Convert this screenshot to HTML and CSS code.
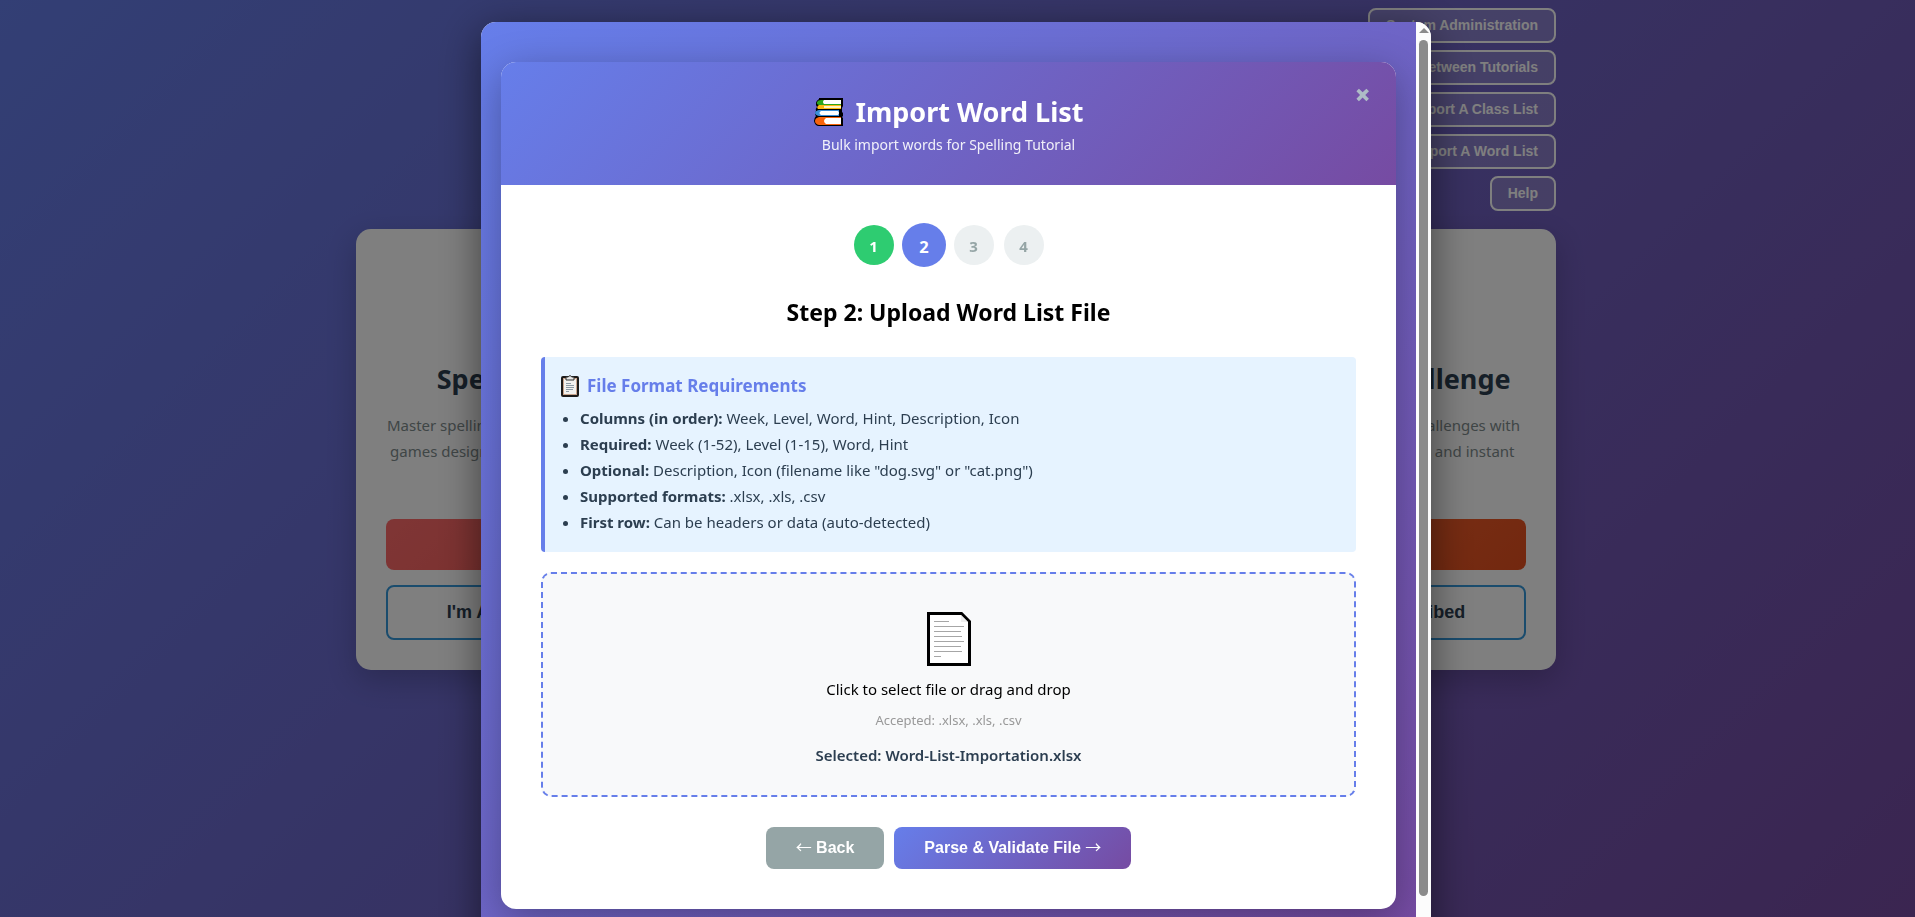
FILE: index.html
```html
<!DOCTYPE html>
<html lang="en">
  <head>
    <meta charset="UTF-8" />
    <meta name="viewport" content="width=device-width, initial-scale=1.0" />
    <title>Import Word List</title>
    <link rel="stylesheet" href="styles.css">
  </head>
  <body>
    <div class="page">
      <nav class="top-menu">
        <button class="menu-btn">System Administration</button>
        <button class="menu-btn">Switch Between Tutorials</button>
        <button class="menu-btn">Import A Class List</button>
        <button class="menu-btn">Import A Word List</button>
        <button class="menu-btn">Help</button>
      </nav>
      <main class="cards">
        <section class="card">
          <h2>Spelling Tutorial</h2>
          <p>Master spelling through engaging interactive games designed for students of all ages and abilities</p>
          <button class="subscribe-btn red">Subscribe</button>
          <button class="member-btn">I'm Already Subscribed</button>
        </section>
        <section class="card">
          <h2>Reading Tutorial</h2>
          <p>Build reading skills with short stories and quizzes</p>
          <button class="subscribe-btn green">Subscribe</button>
          <button class="member-btn">I'm Already Subscribed</button>
        </section>
        <section class="card">
          <h2>Math Facts Challenge</h2>
          <p>Practice your skills in maths challenges with adaptive difficulty progression and instant feedback</p>
          <button class="subscribe-btn orange">Subscribe</button>
          <button class="member-btn">I'm Already Subscribed</button>
        </section>
      </main>
    </div>

    <div class="overlay">
      <div class="modal">
        <div class="modal-body">
          <div class="import-box">
            <header class="import-header">
              <h1>
                <svg class="books" viewBox="0 0 32 32" aria-hidden="true">
                  <path d="M6 2h24v8l-1 2v4l1 1v3l-1 1 1 1v8H6q-4 0-5-5 0-3 2-5-2-2 0-5-1-2 1-4-3-5 2-8z" fill="#000"/>
                  <path d="M8 4h20v5H6q-3-1-2-3 1-2 4-2z" fill="#2ca61c"/>
                  <path d="M11 4h17v4H11q-2-2 0-4z" fill="#fff"/>
                  <path d="M6 9h22v4H5q-2-2 1-4z" fill="#fdb813"/>
                  <path d="M11 10h17v2H11z" fill="#fff3c4"/>
                  <path d="M6 14h20v6H6q-4-1-4-3t4-3z" fill="#3a8fd8"/>
                  <path d="M8 15h17q2 2 0 4H8q-3-2 0-4z" fill="#fff"/>
                  <path d="M6 21h22v8H6q-4-1-4-4t4-4z" fill="#f7630c"/>
                  <path d="M13 22h15v6H13q-4-3 0-6z" fill="#fff"/>
                </svg>
                Import Word List
              </h1>
              <p>Bulk import words for Spelling Tutorial</p>
            </header>
            <div class="import-content">
              <ol class="steps">
                <li class="step done">1</li>
                <li class="step active">2</li>
                <li class="step">3</li>
                <li class="step">4</li>
              </ol>
              <h2 class="step-title">Step 2: Upload Word List File</h2>

              <div class="info-box">
                <h3>
                  <svg class="clipboard" viewBox="0 0 18 22" aria-hidden="true">
                    <rect x="0" y="1" width="18" height="21" rx="2" fill="#1d1a1a"/>
                    <rect x="2" y="3" width="14" height="17" fill="#c9a48c"/>
                    <rect x="3" y="4" width="12" height="15" fill="#f3f1ef"/>
                    <path d="M5 5V2h2q2-3 4 0h2v3z" fill="#e8e8e8" stroke="#333" stroke-width="1"/>
                    <path d="M5 8.500h5M5 10.500h8M5 12.500h8M5 14.500h7M5 16.500h3" stroke="#8d9aa5"/>
                  </svg>
                  File Format Requirements
                </h3>
                <ul>
                  <li><strong>Columns (in order):</strong> Week, Level, Word, Hint, Description, Icon</li>
                  <li><strong>Required:</strong> Week (1-52), Level (1-15), Word, Hint</li>
                  <li><strong>Optional:</strong> Description, Icon (filename like "dog.svg" or "cat.png")</li>
                  <li><strong>Supported formats:</strong> .xlsx, .xls, .csv</li>
                  <li><strong>First row:</strong> Can be headers or data (auto-detected)</li>
                </ul>
              </div>

              <label class="drop-zone" for="wordFile">
                <svg class="file-icon" viewBox="0 0 44 54" aria-hidden="true">
                  <path d="M1.500 1.500h33l8 8v43h-41z" fill="#fff" stroke="#000" stroke-width="3"/>
                  <path d="M34 3v7h7z" fill="#eee"/>
                  <path d="M7 9.500h15M7 14.500h30M7 19.500h27M7 24.500h28M7 29.500h30M7 34.500h27M7 39.500h28M7 44.500h7" stroke="#a6a6a6"/>
                </svg>
                <span class="drop-text">Click to select file or drag and drop</span>
                <span class="drop-hint">Accepted: .xlsx, .xls, .csv</span>
                <span class="drop-file">Selected: Word-List-Importation.xlsx</span>
                <input type="file" id="wordFile" accept=".xlsx,.xls,.csv" hidden>
              </label>

              <div class="actions">
                <button class="btn btn-back"><span class="arrow">←</span> Back</button>
                <button class="btn btn-next">Parse &amp; Validate File <span class="arrow">→</span></button>
              </div>
            </div>
          </div>
        </div>
        <div class="scrollbar">
          <div class="scroll-arrow"></div>
          <div class="scroll-thumb"></div>
        </div>
        <button class="close-btn" aria-label="Close">×</button>
      </div>
    </div>
  </body>
</html>
```
FILE: styles.css
```css
* {
  box-sizing: border-box;
  margin: 0;
  padding: 0;
}

body {
  min-height: 100vh;
  padding-right: 3px;
  font-family: "Segoe UI", "Noto Sans", sans-serif;
  font-size: 15px;
  background: linear-gradient(135deg, #667eea 0%, #764ba2 100%);
  overflow: hidden;
}

.page {
  max-width: 1200px;
  margin: 0 auto;
  padding-top: 8px;
}

.top-menu {
  display: flex;
  flex-direction: column;
  align-items: flex-end;
  gap: 7px;
  margin-bottom: 18px;
}

.menu-btn {
  height: 35px;
  padding: 0 16px 2px;
  border: 2px solid #fff;
  border-radius: 8px;
  background: rgba(255, 255, 255, 0.2);
  color: #fff;
  font: bold 14px "Liberation Sans", Arial, sans-serif;
}

/* Tutorial cards */
.cards {
  display: grid;
  grid-template-columns: repeat(3, 1fr);
  gap: 30px;
}

.card {
  padding: 130px 30px 30px;
  border-radius: 15px;
  background: #fff;
  box-shadow: 0 10px 30px rgba(0, 0, 0, 0.2);
  text-align: center;
}

.card h2 {
  margin-bottom: 13px;
  color: #2c3e50;
  font-size: 27px;
  line-height: 40px;
}

.card p {
  min-height: 78px;
  margin-bottom: 29px;
  color: #7f8c8d;
  line-height: 26px;
}

.card button {
  display: block;
  width: 100%;
  border-radius: 8px;
  font: bold 18px "Liberation Sans", Arial, sans-serif;
}

.subscribe-btn {
  height: 51px;
  margin-bottom: 15px;
  border: none;
  color: #fff;
}

.red {
  background: linear-gradient(135deg, #ff6b6b, #ee5a52);
}

.green {
  background: linear-gradient(135deg, #2ecc71, #27ae60);
}

.orange {
  background: linear-gradient(135deg, #ff6b35, #e5501f);
}

.member-btn {
  height: 55px;
  border: 2px solid #3498db;
  background: #fff;
  color: #2c3e50;
}

/* Modal */
.overlay {
  position: fixed;
  inset: 0;
  padding: 22px 3px 0 0;
  background: rgba(0, 0, 0, 0.5);
}

.modal {
  position: relative;
  display: flex;
  width: 950px;
  max-width: 100%;
  margin: 0 auto;
  border-radius: 15px;
  overflow: hidden;
  background: #fff;
  box-shadow: 0 10px 40px rgba(0, 0, 0, 0.5);
}

.modal-body {
  flex: 1;
  padding: 40px 20px;
  background: linear-gradient(135deg, #667eea 0%, #764ba2 100%);
}

.import-box {
  border-radius: 15px;
  overflow: hidden;
  background: #fff;
  box-shadow: 0 10px 40px rgba(0, 0, 0, 0.3);
}

.import-header {
  padding: 30px;
  background: linear-gradient(135deg, #667eea 0%, #764ba2 100%);
  color: #fff;
  text-align: center;
}

.import-header h1 {
  display: flex;
  justify-content: center;
  align-items: center;
  gap: 10px;
  margin-bottom: 3px;
  font-size: 27px;
  line-height: 40px;
}

.books {
  width: 32px;
  height: 32px;
}

.import-header p {
  font-size: 14px;
  line-height: 20px;
  opacity: 0.9;
}

.import-content {
  padding: 40px;
}

.steps {
  display: flex;
  justify-content: center;
  gap: 10px;
  margin-bottom: 30px;
  list-style: none;
}

.step {
  width: 40px;
  height: 40px;
  border-radius: 50%;
  background: #ecf0f1;
  color: #95a5a6;
  font-weight: bold;
  line-height: 42px;
  text-align: center;
}

.step.done {
  background: #2ecc71;
  color: #fff;
}

.step.active {
  background: #667eea;
  color: #fff;
  transform: scale(1.1);
}

.step-title {
  margin-bottom: 28px;
  font-size: 23px;
  line-height: 34px;
  text-align: center;
}

.info-box {
  padding: 16px 16px 17px;
  margin-bottom: 20px;
  border-left: 4px solid #667eea;
  border-radius: 4px;
  background: #e6f3ff;
  color: #2c3e50;
}

.info-box h3 {
  display: flex;
  align-items: center;
  gap: 8px;
  margin-bottom: 6px;
  color: #667eea;
  font-size: 17px;
  line-height: 26px;
}

.clipboard {
  width: 18px;
  height: 22px;
}

.info-box ul {
  padding-left: 19px;
  line-height: 26px;
}

.drop-zone {
  display: flex;
  flex-direction: column;
  align-items: center;
  padding: 38px 40px 28px;
  border: 2px dashed #667eea;
  border-radius: 10px;
  background: #f8f9fa;
  cursor: pointer;
}

.file-icon {
  width: 44px;
  height: 54px;
  margin-bottom: 11px;
}

.drop-text {
  margin-bottom: 9px;
  line-height: 24px;
}

.drop-hint {
  margin-bottom: 13px;
  color: #999;
  font-size: 13px;
  line-height: 20px;
}

.drop-file {
  color: #2c3e50;
  font-weight: 600;
  line-height: 24px;
}

.actions {
  display: flex;
  justify-content: center;
  gap: 10px;
  margin-top: 30px;
}

.btn {
  height: 42px;
  padding: 0 30px 2px;
  border: none;
  border-radius: 8px;
  color: #fff;
  font: bold 16px "Liberation Sans", Arial, sans-serif;
  cursor: pointer;
}

.btn-back {
  background: #95a5a6;
}

.btn-next {
  background: linear-gradient(135deg, #667eea 0%, #764ba2 100%);
}

.arrow {
  font-family: "Noto Sans CJK JP", sans-serif;
  font-weight: normal;
  line-height: 1;
}

.scrollbar {
  display: flex;
  flex-direction: column;
  align-items: center;
  width: 15px;
  background: #fcfcfc;
}

.scroll-arrow {
  margin: 6px 0 7px;
  border: 5px solid transparent;
  border-top: none;
  border-bottom-color: #8b8b8b;
}

.scroll-thumb {
  width: 9px;
  flex: 1;
  margin-bottom: 53px;
  border-radius: 5px;
  background: #8b8b8b;
}

.close-btn {
  position: absolute;
  top: 54px;
  right: 60px;
  border: none;
  background: none;
  color: #aebcc6;
  font: 900 28px/36px "Noto Sans", sans-serif;
  cursor: pointer;
}
```
